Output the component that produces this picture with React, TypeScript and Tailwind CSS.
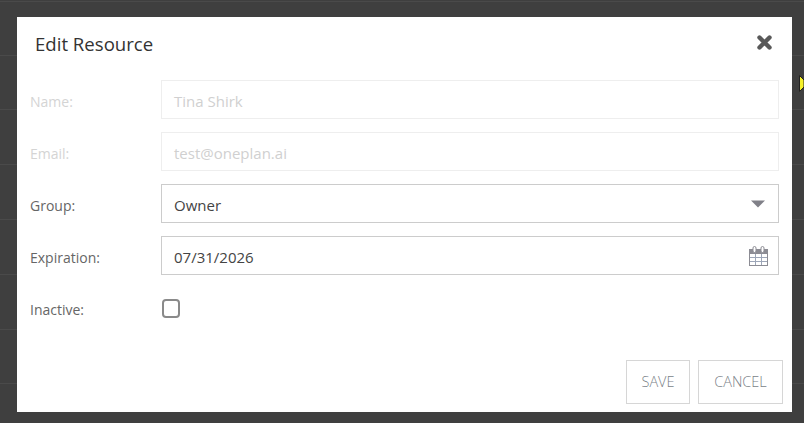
const font = { fontFamily: '"Open Sans", "Noto Sans", sans-serif' };

function Field({ label, children, disabled }: { label: string; children: React.ReactNode; disabled?: boolean }) {
  return (
    <div className="flex h-[39px] items-center">
      <div className={`w-[131px] shrink-0 pt-[4px] text-[14px] ${disabled ? "text-[#d4d4d4]" : "text-[#666666]"}`}>{label}</div>
      {children}
    </div>
  );
}

function Box({ children, disabled, icon }: { children: React.ReactNode; disabled?: boolean; icon?: React.ReactNode }) {
  return (
    <div
      className={`flex h-[39px] w-[618px] items-center justify-between border bg-white pl-[12px] pr-[10px] text-[15px] ${
        disabled ? "border-[#eeeeee] text-[#d0d0d0]" : "border-[#cccccc] text-[#444444]"
      }`}
    >
      <span className="pt-[4px]">{children}</span>
      {icon}
    </div>
  );
}

function Calendar() {
  return (
    <svg width="19" height="20" viewBox="0 0 19 20" fill="none">
      <rect x="0.5" y="3.5" width="18" height="16" fill="#ffffff" stroke="#8c8c94" />
      <rect x="0.5" y="3.5" width="18" height="4" fill="#8c8c94" stroke="#8c8c94" />
      <path d="M6.5 8v11M12.5 8v11M1 11.5h17M1 15.5h17" stroke="#9da6b8" />
      <rect x="4" y="0.5" width="3" height="6" rx="1.5" fill="#ffffff" stroke="#8c8c94" />
      <rect x="12" y="0.5" width="3" height="6" rx="1.5" fill="#ffffff" stroke="#8c8c94" />
    </svg>
  );
}

export default function App() {
  return (
    <div className="relative h-[423px] w-[804px] overflow-hidden bg-[#3f3f3f]" style={font}>
      <div className="absolute inset-0 flex flex-col pt-px">
        <div className="h-[54px] border-t border-[#4a4a4a]" />
        <div className="h-[54px] border-t border-[#4a4a4a]" />
        <div className="h-[55px] border-t border-[#4a4a4a]" />
        <div className="h-[55px] border-t border-[#4a4a4a]" />
        <div className="h-[55px] border-t border-[#4a4a4a]" />
        <div className="h-[55px] border-t border-[#4a4a4a]" />
        <div className="h-[54px] border-t border-[#4a4a4a]" />
        <div className="h-[40px] border-t border-[#4a4a4a]" />
      </div>

      <svg className="absolute left-[799px] top-[75px]" width="5" height="17" viewBox="0 0 5 17">
        <path d="M0.5 0.5 L5 5 V12 L0.5 16.5 Z" fill="#f5f02a" stroke="#222222" strokeWidth="1" />
      </svg>

      <div className="absolute left-[17px] top-[17px] flex h-[395px] w-[775px] flex-col bg-white">
        <div className="flex h-[63px] items-start justify-between pl-[18px] pr-[20px] pt-[14px]">
          <h2 className="text-[18.6px] leading-[26px] text-[#333333]">Edit Resource</h2>
          <svg className="mt-[4px]" width="15" height="15" viewBox="0 0 15 15">
            <path d="M2.5 2.5 L12.5 12.5 M12.5 2.5 L2.5 12.5" stroke="#595959" strokeWidth="4.4" strokeLinecap="round" />
          </svg>
        </div>

        <div className="flex flex-col gap-[13px] pl-[13px]">
          <Field label="Name:" disabled>
            <Box disabled>Tina Shirk</Box>
          </Field>
          <Field label="Email:" disabled>
            <Box disabled>test@oneplan.ai</Box>
          </Field>
          <Field label="Group:">
            <Box
              icon={
                <svg width="14" height="8" viewBox="0 0 14 8" className="mr-[3px]">
                  <path d="M0 0.5 H14 L7 7.5 Z" fill="#808088" />
                </svg>
              }
            >
              Owner
            </Box>
          </Field>
          <Field label="Expiration:">
            <Box icon={<Calendar />}>07/31/2026</Box>
          </Field>
          <Field label="Inactive:">
            <div className="ml-px mt-px h-[19px] w-[18px] rounded-[4px] border-2 border-[#8a8a8a] bg-white" />
          </Field>
        </div>

        <div className="mt-[33px] flex justify-end gap-[8px] pr-[9px]">
          <button className="h-[44px] w-[64px] border border-[#d6d6d6] bg-white text-[14.5px] font-light text-[#7a7f88]">
            SAVE
          </button>
          <button className="h-[44px] w-[85px] border border-[#d6d6d6] bg-white text-[14.5px] font-light text-[#7a7f88]">
            CANCEL
          </button>
        </div>
      </div>
    </div>
  );
}
